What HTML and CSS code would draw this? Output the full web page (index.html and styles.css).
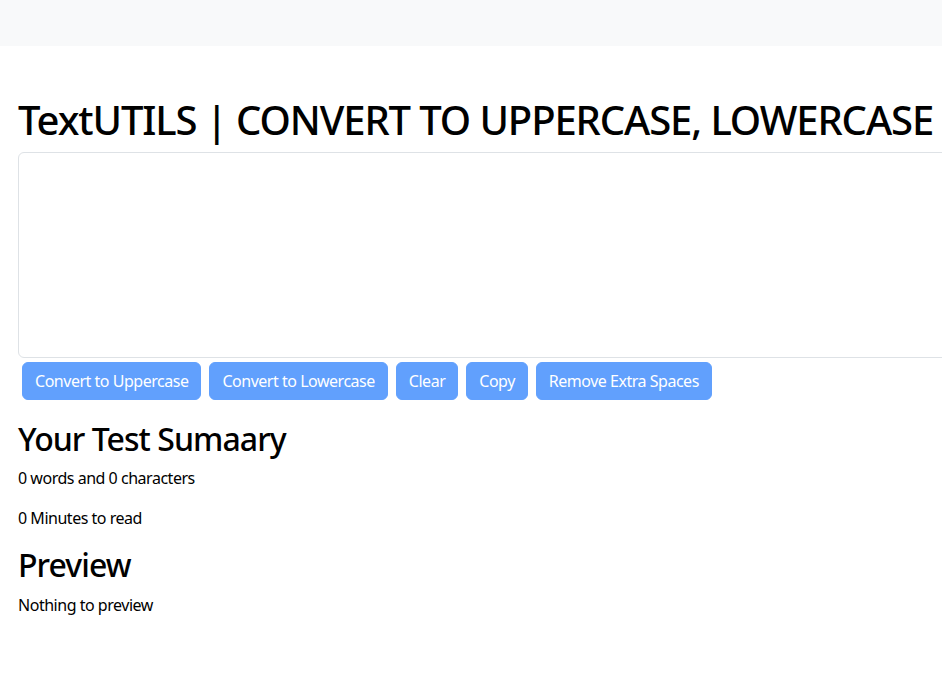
FILE: index.html
```html
<!DOCTYPE html>
<html lang="en">
<head>
<meta charset="utf-8">
<title>TextUtils</title>
<link rel="stylesheet" href="styles.css">
</head>
<body>
<nav class="navbar"></nav>
<main class="container top">
  <h1 class="title">TextUTILS | CONVERT TO UPPERCASE, LOWERCASE</h1>
  <textarea class="textbox" rows="8"></textarea>
  <div class="actions">
    <button class="btn" disabled>Convert to Uppercase</button>
    <button class="btn" disabled>Convert to Lowercase</button>
    <button class="btn" disabled>Clear</button>
    <button class="btn" disabled>Copy</button>
    <button class="btn" disabled>Remove Extra Spaces</button>
  </div>
</main>
<section class="container summary">
  <h2 class="subtitle">Your Test Sumaary</h2>
  <p class="text">0 words and 0 characters</p>
  <p class="text">0 Minutes to read</p>
  <h2 class="subtitle">Preview</h2>
  <p class="text">Nothing to preview</p>
</section>
</body>
</html>
```
FILE: styles.css
```css
html {
  overflow: hidden;
}
body {
  margin: 0;
  font-family: "Noto Sans", "Open Sans", sans-serif;
  font-size: 16px;
  line-height: 1.5;
  letter-spacing: -0.03em;
  color: #212529;
  background: #fff;
}
.navbar {
  height: 46px;
  background: #f8f9fa;
}
.container {
  padding: 0 0 0 18px;
}
.top {
  padding-top: 50px;
}
.title {
  margin: 0 0 8px;
  font-size: 40px;
  font-weight: 500;
  line-height: 1.2;
  letter-spacing: -1.1px;
  color: #000;
  white-space: nowrap;
}
.textbox {
  display: block;
  box-sizing: border-box;
  width: 1300px;
  height: 206px;
  margin: 0;
  padding: 6px 12px;
  font: inherit;
  border: 1px solid #dee2e6;
  border-radius: 6px;
  resize: vertical;
}
.actions {
  display: flex;
  gap: 8px;
  padding: 4px 4px;
}
.btn {
  height: 38px;
  padding: 6px 12px;
  font-family: inherit;
  font-size: 16px;
  line-height: 1.5;
  letter-spacing: inherit;
  color: #fff;
  background: #0d6efd;
  border: 1px solid #0d6efd;
  border-radius: 6px;
  opacity: 0.65;
}
.summary {
  padding-top: 16px;
}
.subtitle {
  margin: 0 0 8px;
  font-size: 32px;
  font-weight: 500;
  line-height: 1.2;
  letter-spacing: -0.95px;
  color: #000;
}
.text {
  margin: 0 0 16px;
  color: #000;
}
```
